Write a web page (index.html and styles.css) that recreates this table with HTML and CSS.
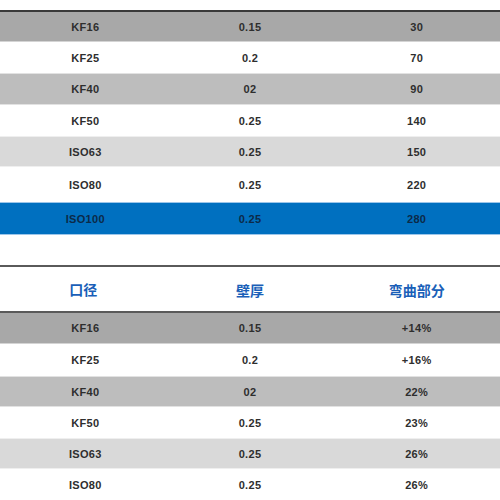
FILE: index.html
```html
<!DOCTYPE html>
<html lang="zh">
<head>
<meta charset="utf-8">
<link rel="stylesheet" href="styles.css">
</head>
<body>
<div class="page">
  <section class="table first">
    <div class="row dark h30"><span>KF16</span><span>0.15</span><span>30</span></div>
    <div class="row white h31"><span>KF25</span><span>0.2</span><span>70</span></div>
    <div class="row mid h32"><span>KF40</span><span>02</span><span>90</span></div>
    <div class="row white h31"><span>KF50</span><span>0.25</span><span>140</span></div>
    <div class="row light h31"><span>ISO63</span><span>0.25</span><span>150</span></div>
    <div class="row white h35"><span>ISO80</span><span>0.25</span><span>220</span></div>
    <div class="row blue h33"><span>ISO100</span><span>0.25</span><span>280</span></div>
  </section>
  <section class="table second">
    <div class="row head"><span>口径</span><span>壁厚</span><span>弯曲部分</span></div>
    <div class="row dark h31"><span>KF16</span><span>0.15</span><span>+14%</span></div>
    <div class="row white h32"><span>KF25</span><span>0.2</span><span>+16%</span></div>
    <div class="row mid h31"><span>KF40</span><span>02</span><span>22%</span></div>
    <div class="row white h31"><span>KF50</span><span>0.25</span><span>23%</span></div>
    <div class="row light h31"><span>ISO63</span><span>0.25</span><span>26%</span></div>
    <div class="row white h31"><span>ISO80</span><span>0.25</span><span>26%</span></div>
  </section>
</div>
</body>
</html>
```
FILE: styles.css
```css
html, body {
  margin: 0;
  padding: 0;
  background: #ffffff;
}
.page {
  width: 500px;
  font-family: "Liberation Sans", Arial, "Noto Sans CJK SC", sans-serif;
  font-weight: bold;
  font-size: 11px;
  color: #2e2e2e;
}
.table.first {
  margin-top: 10px;
  border-top: 2px solid #3a3a3a;
}
.table.second {
  margin-top: 30px;
  border-top: 2px solid #5a5a5a;
}
.row {
  display: grid;
  grid-template-columns: repeat(3, 1fr);
  align-items: center;
  justify-items: center;
  box-sizing: border-box;
  letter-spacing: 0.3px;
}
.row span:first-child { transform: translateX(2px); }
.h30 { height: 30px; }
.h31 { height: 31px; }
.h32 { height: 32px; }
.h33 { height: 33px; }
.h35 { height: 35px; }
.dark { background: #a8a8a8; border-bottom: 1px solid #d4d4d4; }
.mid { background: #bdbdbd; border-top: 1px solid #e2e2e2; border-bottom: 1px solid #e2e2e2; }
.light { background: #d9d9d9; border-top: 1px solid #efefef; border-bottom: 1px solid #efefef; }
.white { background: #ffffff; }
.blue {
  background: #0070c0;
  border-top: 1px solid #9cc6ea;
  border-bottom: 1px solid #9cc6ea;
  color: #0c2a48;
}
.head {
  height: 46px;
  border-bottom: 2px solid #5a5a5a;
  font-family: "Noto Sans CJK SC", "Liberation Sans", sans-serif;
  font-size: 14px;
  font-weight: bold;
  color: #1a5fb8;
  letter-spacing: 0;
}
.head span:first-child { transform: none; }
.head span { transform: translateY(1px); }
```
